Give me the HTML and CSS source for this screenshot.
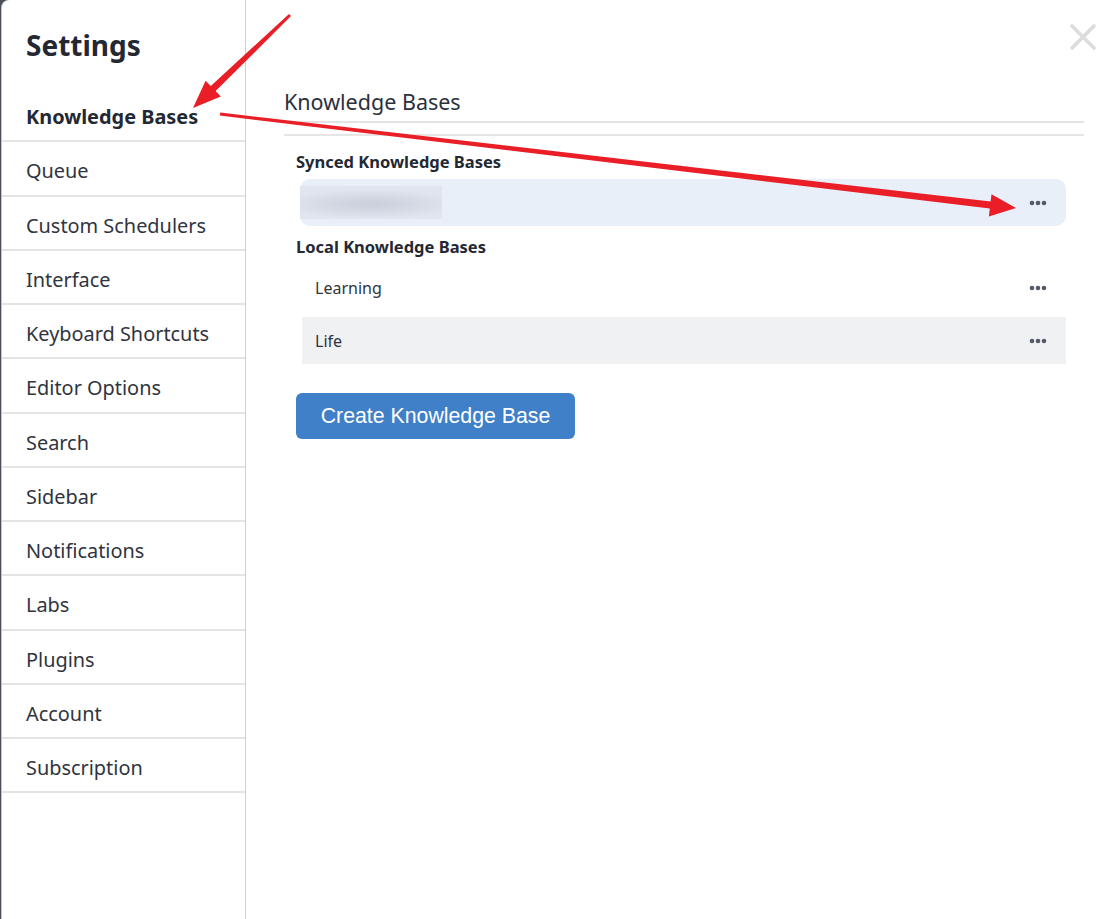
FILE: index.html
```html
<!DOCTYPE html>
<html lang="en">
<head>
<meta charset="utf-8">
<title>Settings</title>
<link rel="stylesheet" href="styles.css">
</head>
<body>
<div class="modal">
  <aside class="sidebar">
    <h1 class="title">Settings</h1>
    <nav class="nav">
      <div class="nav-item active">Knowledge Bases</div>
      <div class="nav-item">Queue</div>
      <div class="nav-item">Custom Schedulers</div>
      <div class="nav-item">Interface</div>
      <div class="nav-item">Keyboard Shortcuts</div>
      <div class="nav-item">Editor Options</div>
      <div class="nav-item">Search</div>
      <div class="nav-item">Sidebar</div>
      <div class="nav-item">Notifications</div>
      <div class="nav-item">Labs</div>
      <div class="nav-item">Plugins</div>
      <div class="nav-item">Account</div>
      <div class="nav-item">Subscription</div>
    </nav>
  </aside>
  <main class="content">
    <div class="close-row">
      <svg class="close" width="28" height="28" viewBox="0 0 28 28"><path d="M3 3L25 25M25 3L3 25" stroke="#dcdcdc" stroke-width="3.6" stroke-linecap="round" fill="none"/></svg>
    </div>
    <h2 class="heading">Knowledge Bases</h2>
    <div class="rule"></div>
    <section class="group">
      <h3 class="group-title">Synced Knowledge Bases</h3>
      <div class="kb-row synced">
        <div class="blurred"></div>
        <svg class="dots" width="18" height="6" viewBox="0 0 18 6"><circle cx="3" cy="3" r="2.3" fill="#545a66"/><circle cx="9" cy="3" r="2.3" fill="#545a66"/><circle cx="15" cy="3" r="2.3" fill="#545a66"/></svg>
      </div>
      <h3 class="group-title local">Local Knowledge Bases</h3>
      <div class="kb-row local-row first">
        <span class="kb-name">Learning</span>
        <svg class="dots" width="18" height="6" viewBox="0 0 18 6"><circle cx="3" cy="3" r="2.3" fill="#545a66"/><circle cx="9" cy="3" r="2.3" fill="#545a66"/><circle cx="15" cy="3" r="2.3" fill="#545a66"/></svg>
      </div>
      <div class="kb-row local-row hover">
        <span class="kb-name">Life</span>
        <svg class="dots" width="18" height="6" viewBox="0 0 18 6"><circle cx="3" cy="3" r="2.3" fill="#545a66"/><circle cx="9" cy="3" r="2.3" fill="#545a66"/><circle cx="15" cy="3" r="2.3" fill="#545a66"/></svg>
      </div>
      <button class="create-btn">Create Knowledge Base</button>
    </section>
  </main>
  <svg class="annotations" width="1115" height="919" viewBox="0 0 1115 919">
    <polygon fill="#e91e26" points="289,13.9 210.8,86.1 205.6,80.7 193,108 220.8,96.5 215.6,91.1 291,16.1"/>
    <polygon fill="#e91e26" points="220.2,112.5 990.6,201.6 991.5,194.2 1016,208 988.9,216.5 989.8,208.6 219.8,115.5"/>
  </svg>
</div>
</body>
</html>
```

FILE: styles.css
```css
* { box-sizing: border-box; }
html, body { margin: 0; padding: 0; }
body {
  background: #4a4f5a;
  font-family: "Noto Sans", "Open Sans", sans-serif;
  color: #2b303b;
  width: 1115px;
  height: 919px;
  overflow: hidden;
}
.modal {
  position: relative;
  margin-left: 1px;
  height: 919px;
  background: #fff;
  border-left: 1px solid #c4c4c4;
  border-top-left-radius: 8px;
  display: flex;
}
.sidebar {
  width: 244px;
  flex: none;
  border-right: 1px solid #cfcfcf;
}
.title {
  margin: 0;
  height: 88px;
  padding: 26px 0 0 24px;
  font-size: 28px;
  font-weight: 700;
  line-height: 38px;
  color: #232833;
}
.nav-item {
  height: 54.25px;
  border-bottom: 2px solid #e4e4e4;
  padding: 5px 0 0 24px;
  display: flex;
  align-items: center;
  font-size: 19.9px;
  color: #30343e;
}
.nav-item.active { font-weight: 700; color: #232833; }
.content {
  flex: 1;
  padding: 0 31px 0 38px;
  position: relative;
}
.close-row {
  display: flex;
  justify-content: flex-end;
  margin-right: -13px;
  padding-top: 23px;
  height: 88px;
}
.heading {
  margin: 0;
  font-size: 21.5px;
  font-weight: 400;
  line-height: 28px;
  padding-bottom: 5px;
  border-bottom: 2px solid #e3e3e3;
  color: #2b303b;
}
.rule {
  height: 2px;
  background: #e6e6e6;
  margin-top: 11px;
}
.group {
  padding: 15px 18px 0 12px;
}
.group-title {
  margin: 0;
  font-size: 16.5px;
  font-weight: 700;
  line-height: 22px;
  color: #232833;
}
.group-title.local { margin-top: 10px; }
.kb-row {
  height: 47px;
  display: flex;
  align-items: center;
  justify-content: space-between;
  padding-right: 19px;
}
.synced {
  margin-top: 6px;
  margin-left: 4px;
  background: #e8eff9;
  border-radius: 10px;
  padding-left: 0;
}
.blurred {
  width: 142px;
  height: 33px;
  background: radial-gradient(ellipse 62% 45% at 50% 55%, #c9cfdb 0%, #d4d9e4 50%, #e1e5ee 100%);
}
.local-row {
  margin-left: 6px;
  padding-left: 13px;
  margin-top: 6px;
}
.local-row.first { margin-top: 6px; }
.hover { background: #f0f1f3; }
.kb-name { font-size: 16px; color: #30343e; }
.create-btn {
  margin-top: 29px;
  width: 279px;
  height: 46px;
  border: none;
  border-radius: 6px;
  background: #3f80c8;
  color: #fff;
  font-family: "Liberation Sans", Arial, sans-serif;
  font-size: 21.3px;
  padding: 0;
}
.annotations {
  position: absolute;
  left: -2px;
  top: 0;
  pointer-events: none;
}
```
